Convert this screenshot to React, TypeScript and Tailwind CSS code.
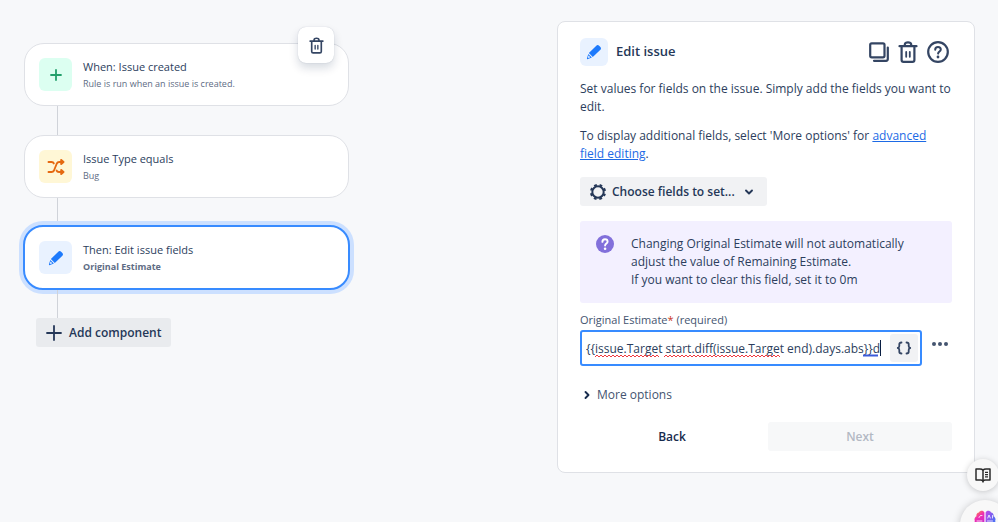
import { useState } from 'react'
import type { ReactNode } from 'react'
import { clsx } from 'clsx'

function TrashIcon({ className }: { className?: string }) {
  return (
    <svg viewBox="0 0 20 22" className={className} fill="none" stroke="currentColor" strokeWidth="2.2" strokeLinecap="round" strokeLinejoin="round" aria-hidden="true">
      <path d="M1.5 5.2h17" />
      <path d="M6.8 5V3.400C6.800 2.100 8 1.300 10 1.300s3.200.8 3.200 2.100V5" />
      <path d="M3.600 6v13c0 1.200.8 1.900 1.900 1.900h9c1.100 0 1.900-.7 1.900-1.900V6" />
      <path d="M8.200 11v4.800M11.800 11v4.800" strokeWidth="1.800" />
    </svg>
  )
}

function CopyIcon() {
  return (
    <svg viewBox="0 0 20 20" className="size-5" fill="none" stroke="currentColor" strokeWidth="2.200" strokeLinecap="round" strokeLinejoin="round" aria-hidden="true">
      <rect x="1.200" y="1.300" width="14.300" height="14" rx="1.500" />
      <path d="M18.800 5.500v11.600c0 1-.7 1.700-1.700 1.700H5" />
    </svg>
  )
}

function HelpIcon() {
  return (
    <svg viewBox="0 0 22 22" className="size-[22px]" fill="none" stroke="currentColor" strokeLinecap="round" strokeLinejoin="round" aria-hidden="true">
      <circle cx="11" cy="11" r="9.800" strokeWidth="2.200" />
      <path d="M8.200 8.700C8.200 7 9.400 6 11 6s2.800 1 2.800 2.600c0 1.900-2.600 2-2.700 4" strokeWidth="2" />
      <circle cx="11" cy="16" r="1.400" fill="currentColor" stroke="none" />
    </svg>
  )
}

function PencilIcon() {
  return (
    <svg viewBox="0 0 16 16" className="size-4" fill="#1d7afc" aria-hidden="true">
      <path d="M10.300 1.700c.8-.8 2-.8 2.800 0l1.300 1.200c.8.8.8 2 0 2.800L6.800 13 2.900 9z" />
      <path d="M2.300 9.900l3.600 3.600-3.900 1.600c-.7.200-1.200-.2-1-.9z" />
      <path d="M2.600 11.600l1.700 1.700-1.700.7-.700-.7z" fill="#e9f2ff" />
    </svg>
  )
}

function PlusIcon() {
  return (
    <svg viewBox="0 0 12 12" className="size-3" fill="none" stroke="#22a06b" strokeWidth="1.800" strokeLinecap="round" aria-hidden="true">
      <path d="M6 1v10M1 6h10" />
    </svg>
  )
}

function ShuffleIcon() {
  return (
    <svg viewBox="0 0 18 16" className="h-4 w-[18px]" fill="none" stroke="#e56910" strokeWidth="1.900" strokeLinecap="round" strokeLinejoin="round" aria-hidden="true">
      <path d="M1.500 3h3c1.200 0 2 .5 2.300 1.400M9.600 11.600c.4 1 1.200 1.400 2.400 1.400H15" />
      <path d="M1.500 13h3c1.200 0 2-.5 2.500-1.500l2.800-7C10.300 3.500 11 3 12.200 3H15" />
      <path d="M14.200.9L16.500 3l-2.300 2.100zM14.200 10.900l2.300 2.100-2.300 2.100z" fill="#e56910" />
    </svg>
  )
}

function GearIcon() {
  return (
    <svg viewBox="0 0 18 18" className="size-[18px]" fill="none" stroke="currentColor" aria-hidden="true">
      <circle cx="9" cy="9" r="5.700" strokeWidth="2" />
      <circle cx="9" cy="9" r="7.100" strokeWidth="2" strokeDasharray="2.800 2.776" strokeDashoffset="1.400" transform="rotate(22.500 9 9)" />
    </svg>
  )
}

function InfoIcon() {
  return (
    <svg viewBox="0 0 20 20" className="size-5 shrink-0" aria-hidden="true">
      <circle cx="10" cy="9" r="9" fill="#8270db" />
      <path d="M7.400 6.900C7.400 5.300 8.500 4.300 10 4.300s2.600 1 2.600 2.400c0 1.800-2.500 1.900-2.500 3.800" fill="none" stroke="#fff" strokeWidth="1.900" strokeLinecap="round" />
      <circle cx="10.100" cy="13.700" r="1.300" fill="#fff" />
    </svg>
  )
}

function BookIcon() {
  return (
    <svg viewBox="0 0 16 15" className="h-[15px] w-4" fill="none" stroke="#2b2b2b" strokeWidth="1.500" strokeLinejoin="round" aria-hidden="true">
      <path d="M8 2.200C7.300 1.300 6.300 1 5 1H1v11h4.500c1.200 0 2 .3 2.500 1 .5-.7 1.300-1 2.500-1H15V1h-4C9.700 1 8.700 1.300 8 2.200z" />
      <path d="M8 2.200v12.300" />
      <path d="M10 4.300h3M10 6.600h3M10 8.900h3" strokeWidth="1.200" />
    </svg>
  )
}

function BrainIcon() {
  return (
    <svg viewBox="0 0 22 22" className="size-[22px]" aria-hidden="true">
      <defs>
        <linearGradient id="brain-left" x1="0" y1="0" x2="0.400" y2="1">
          <stop offset="0" stopColor="#ffa01f" />
          <stop offset="0.400" stopColor="#f02fb0" />
          <stop offset="1" stopColor="#c026d3" />
        </linearGradient>
        <linearGradient id="brain-right" x1="0" y1="0" x2="1" y2="0.800">
          <stop offset="0" stopColor="#c445e8" />
          <stop offset="1" stopColor="#2f7bf6" />
        </linearGradient>
      </defs>
      <path d="M10.400 2.500C9.500.4 6.200.3 5 2.400 2.900 2.700 2 4.600 2.500 6.200.6 7.200 0 9.400.9 11c-1.200 2-.4 4.600 1.500 5.400.4 2.400 2.600 3.600 4.300 3.200 1.300 1.500 3.100 1 3.700-.6z" fill="url(#brain-left)" />
      <path d="M11.600 2.500C12.500.4 15.800.3 17 2.400c2.100.3 3 2.200 2.500 3.800 1.900 1 2.500 3.200 1.600 4.800 1.200 2 .4 4.600-1.500 5.400-.4 2.400-2.600 3.600-4.300 3.200-1.300 1.500-3.100 1-3.700-.6z" fill="url(#brain-right)" />
      <path d="M5 7.500c.3-1.600 1.300-2.200 3-2M3 11h5M13.800 8l1.200-3 1.300 3M18.500 5.500v2.500M13.500 11h5" fill="none" stroke="#fff" strokeWidth="0.800" strokeLinecap="round" />
    </svg>
  )
}

interface RuleCardProps {
  title: string
  detail: string
  icon: ReactNode
  tileClass: string
  selected?: boolean
}

function RuleCard({ title, detail, icon, tileClass, selected }: RuleCardProps) {
  return (
    <button
      type="button"
      aria-pressed={!!selected}
      className={clsx(
        'flex items-center gap-[11px] rounded-[20px] bg-white p-[14px] text-left',
        selected
          ? '-mx-px w-[calc(100%+2px)] border-2 border-[#388bff] ring-4 ring-[#cce0ff]'
          : 'w-full border border-[#dfe1e6]'
      )}
    >
      <span className={clsx('flex size-[33px] shrink-0 items-center justify-center rounded-md', tileClass)}>{icon}</span>
      <span className="block">
        <span className="block text-[11px] leading-[18px] text-[#2c3e5d]">{title}</span>
        <span className={clsx('block text-[9px] leading-[15px] text-[#5e6c84]', selected && 'font-bold')}>{detail}</span>
      </span>
    </button>
  )
}

function Connector({ className }: { className: string }) {
  return <div className={clsx('ml-[33px] w-px bg-[#d0d3d9]', className)} />
}

function RuleChain() {
  return (
    <section aria-label="Rule" className="w-[325px] max-w-full pt-[43px]">
      <div className="relative">
        <RuleCard title="When: Issue created" detail="Rule is run when an issue is created." tileClass="bg-[#dcfff1]" icon={<PlusIcon />} />
        <button
          type="button"
          aria-label="Delete component"
          className="absolute -top-4 right-[15px] flex size-9 items-center justify-center rounded-lg bg-white text-[#344563] shadow-[0_5px_10px_rgba(9,30,66,0.16),0_0_1px_rgba(9,30,66,0.25)]"
        >
          <TrashIcon className="h-[17px] w-[15px]" />
        </button>
      </div>
      <Connector className="h-[29px]" />
      <RuleCard title="Issue Type equals" detail="Bug" tileClass="bg-[#fff7d6]" icon={<ShuffleIcon />} />
      <Connector className="h-[27px]" />
      <RuleCard title="Then: Edit issue fields" detail="Original Estimate" tileClass="bg-[#e9f2ff]" icon={<PencilIcon />} selected />
      <Connector className="h-[28px]" />
      <button type="button" className="ml-3 flex h-[29px] items-center gap-[7px] rounded-[3px] bg-[#e9ebee] px-[10px] text-[12px] font-semibold text-[#253858]">
        <svg viewBox="0 0 16 16" className="size-4" fill="none" stroke="currentColor" strokeWidth="1.800" strokeLinecap="round" aria-hidden="true">
          <path d="M8 1v14M1 8h14" />
        </svg>
        Add component
      </button>
    </section>
  )
}

// zigzag under a run of misspelled text, 4px per wave
function wave(from: number, to: number) {
  let d = `M${from} 3`
  for (let x = from + 2, up = true; x <= to; x += 2, up = !up) d += `L${x} ${up ? 1 : 3}`
  return d
}

function EstimateField() {
  const [value, setValue] = useState('{{issue.Target start.diff(issue.Target end).days.abs}}d')

  return (
    <div className="mt-[9px]">
      <label htmlFor="estimate" className="block text-[11px] leading-4 text-[#44546f]">
        <span className="font-medium">Original Estimate</span>
        <span className="text-[#ca3521]">*</span> (required)
      </label>
      <div className="mt-[2px] flex items-start gap-[6px]">
        <div className="relative flex h-9 min-w-0 flex-1 items-center rounded-[3px] border-2 border-[#388bff] bg-white pr-[2px] pl-1">
          <input
            id="estimate"
            type="text"
            spellCheck={false}
            value={value}
            onChange={(e) => setValue(e.target.value)}
            className="h-8 min-w-0 flex-1 bg-transparent text-[12px] text-[#2c3e5d] outline-none"
          />
          <svg className="pointer-events-none absolute top-[22px] left-0 h-1 w-[300px]" fill="none" aria-hidden="true">
            <path d={wave(13, 77)} stroke="#f0383e" />
            <path d={wave(82, 198)} stroke="#f0383e" />
            <path d="M281 1.500h15" stroke="#3b5bdb" strokeWidth="2" />
          </svg>
          <span className="pointer-events-none absolute top-2 left-[298px] h-4 w-px bg-[#091e42]" />
          <button type="button" aria-label="Insert smart value" className="flex h-7 w-7 shrink-0 items-center justify-center rounded-[3px] bg-[#f1f2f4] text-[#344563]">
            <svg viewBox="0 0 16 14" className="h-[14px] w-4" fill="none" stroke="currentColor" strokeWidth="1.800" strokeLinecap="round" strokeLinejoin="round" aria-hidden="true">
              <path d="M5.500 1.500c-1.600 0-2.200.5-2.200 1.700v1.900c0 1-.5 1.700-1.500 1.900 1 .2 1.500.9 1.500 1.900v1.900c0 1.200.6 1.700 2.200 1.700M10.500 1.500c1.600 0 2.200.5 2.200 1.700v1.900c0 1 .5 1.700 1.500 1.900-1 .2-1.500.9-1.500 1.900v1.900c0 1.200-.6 1.700-2.200 1.700" />
            </svg>
          </button>
        </div>
        <button type="button" aria-label="Field actions" className="flex h-7 w-6 items-center justify-center text-[#44546f]">
          <svg viewBox="0 0 18 6" className="h-[6px] w-[18px]" fill="currentColor" aria-hidden="true">
            <circle cx="3" cy="3" r="2" />
            <circle cx="9" cy="3" r="2" />
            <circle cx="15" cy="3" r="2" />
          </svg>
        </button>
      </div>
    </div>
  )
}

function EditPanel() {
  return (
    <main className="mt-[21px] w-[418px] shrink-0 rounded-lg border border-[#dfe1e6] bg-white px-[22px] pt-4 pb-[21px]">
      <header className="flex items-center gap-2">
        <span className="flex size-7 items-center justify-center rounded-md bg-[#e9f2ff]">
          <PencilIcon />
        </span>
        <h1 className="text-[13px] font-semibold text-[#253858]">Edit issue</h1>
        <div className="ml-auto flex items-center gap-[9px] pr-[3px] text-[#344563]">
          <button type="button" aria-label="Duplicate"><CopyIcon /></button>
          <button type="button" aria-label="Delete"><TrashIcon className="h-[22px] w-5" /></button>
          <button type="button" aria-label="Help"><HelpIcon /></button>
        </div>
      </header>

      <p className="mt-[14px] text-[12px] leading-[18px] text-[#2c3e5d]">
        Set values for fields on the issue. Simply add the fields you want to edit.
      </p>
      <p className="mt-[11px] text-[12px] leading-[18px] text-[#2c3e5d]">
        To display additional fields, select 'More options' for{' '}
        <a href="#advanced" className="text-[#1d6ae5] underline">advanced field editing</a>.
      </p>

      <button type="button" aria-haspopup="listbox" className="mt-[14px] flex h-[29px] items-center gap-[5px] rounded-[3px] bg-[#f1f2f4] pr-[13px] pl-[9px] text-[12px] font-semibold text-[#253858]">
        <GearIcon />
        Choose fields to set...
        <svg viewBox="0 0 10 10" className="ml-1 size-[10px]" fill="none" stroke="currentColor" strokeWidth="1.900" strokeLinecap="round" strokeLinejoin="round" aria-hidden="true">
          <path d="M2 3.500l3 3 3-3" />
        </svg>
      </button>

      <div className="mt-[15px] flex gap-4 rounded-[3px] bg-[#f3f0ff] px-[15px] py-[14px]">
        <InfoIcon />
        <p className="text-[12px] leading-[18px] text-[#2c3e5d]">
          Changing Original Estimate will not automatically adjust the value of Remaining Estimate.
          <br />
          If you want to clear this field, set it to 0m
        </p>
      </div>

      <EstimateField />

      <button type="button" className="mt-5 flex items-center gap-[5px] pl-[2px] text-[12px] leading-[18px] text-[#44546f]">
        <svg viewBox="0 0 10 10" className="size-[10px] text-[#172b4d]" fill="none" stroke="currentColor" strokeWidth="1.900" strokeLinecap="round" strokeLinejoin="round" aria-hidden="true">
          <path d="M3.500 2l3 3-3 3" />
        </svg>
        More options
      </button>

      <div className="mt-[18px] grid grid-cols-2 gap-1 text-[12px] font-semibold">
        <button type="button" className="h-[29px] rounded-[3px] text-[#172b4d]">Back</button>
        <button type="button" disabled className="h-[29px] rounded-[3px] bg-[#f7f8f9] text-[#b3b9c4]">Next</button>
      </div>
    </main>
  )
}

export default function App() {
  return (
    <div className="relative flex min-h-screen items-start justify-between gap-6 overflow-hidden bg-[#f7f8fa] pr-[23px] pl-6 font-['Open_Sans','Noto_Sans',sans-serif]">
      <RuleChain />
      <EditPanel />
      <button type="button" aria-label="Reader" className="absolute right-[-1px] bottom-[31px] flex size-8 items-center justify-center rounded-full bg-[#f8f8f8] shadow-[0_1px_6px_rgba(0,0,0,0.2)]">
        <BookIcon />
      </button>
      <button type="button" aria-label="Assistant" className="absolute -right-3 -bottom-7 flex h-[50px] w-[50px] items-start justify-center rounded-full bg-[#f8f8f8] pt-[10px] shadow-[0_1px_8px_rgba(0,0,0,0.22)]">
        <BrainIcon />
      </button>
    </div>
  )
}
